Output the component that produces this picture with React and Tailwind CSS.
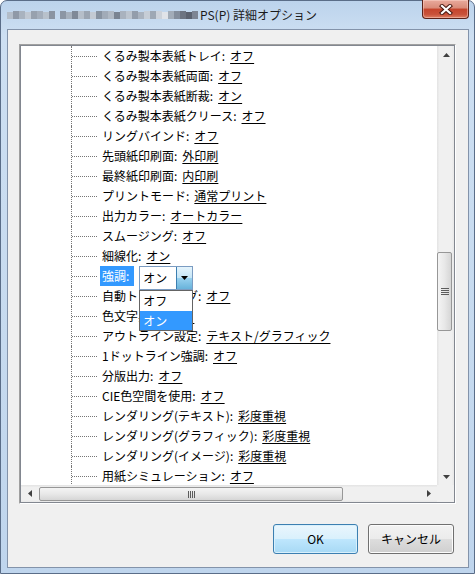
import React from 'react';

const FONT = "font-['Noto_Sans_CJK_JP','Noto_Sans',sans-serif]";

const ROWS_TOP = [
  ['くるみ製本表紙トレイ', 'オフ'],
  ['くるみ製本表紙両面', 'オフ'],
  ['くるみ製本表紙断裁', 'オン'],
  ['くるみ製本表紙クリース', 'オフ'],
  ['リングバインド', 'オフ'],
  ['先頭紙印刷面', '外印刷'],
  ['最終紙印刷面', '内印刷'],
  ['プリントモード', '通常プリント'],
  ['出力カラー', 'オートカラー'],
  ['スムージング', 'オフ'],
  ['細線化', 'オン'],
];

const ROWS_BOTTOM = [
  ['自動トラッピング', 'オフ'],
  ['色文字黒化', 'オフ'],
  ['アウトライン設定', 'テキスト/グラフィック'],
  ['1ドットライン強調', 'オフ'],
  ['分版出力', 'オフ'],
  ['CIE色空間を使用', 'オフ'],
  ['レンダリング(テキスト)', '彩度重視'],
  ['レンダリング(グラフィック)', '彩度重視'],
  ['レンダリング(イメージ)', '彩度重視'],
  ['用紙シミュレーション', 'オフ'],
];

// pixelated (censored) part of the window title
const BLUR_A = ['#b3bdc9', '#8f99a7', '#a9b3bf', '#c0c8d2', '#97a1ae', '#a4aebb', '#b8c1cb', '#8a94a2'];
const BLUR_B = [
  '#8c96a4', '#a7b1bd', '#7f8997', '#b5bec9', '#9ba5b2', '#c3cad3', '#8893a1', '#a1abb8',
  '#b0b9c4', '#7a8492', '#a9b2be', '#bcc4ce', '#939dab', '#aab3bf', '#c6cdd6', '#9ea8b4',
  '#ccd2da', '#e0e3e8', '#a2acb8', '#848e9c', '#6c7482', '#5b6270', '#7d8594',
];

function BlurredTitle() {
  return (
    <svg width="192" height="8" className="mr-[1px] block">
      {BLUR_A.map((c, i) => (
        <rect key={`a${i}`} x={i * 6} y={i % 3 === 0 ? 1 : 0} width="6" height={i % 3 === 0 ? 7 : 8} fill={c} />
      ))}
      {BLUR_B.map((c, i) => (
        <rect key={`b${i}`} x={53 + i * 6} y={i % 4 === 1 ? 1 : 0} width="6" height={i % 4 === 1 ? 7 : 8} fill={c} />
      ))}
    </svg>
  );
}

function Tri({ dir }) {
  const pts = {
    up: '0,4 3.5,0 7,4',
    down: '0,0 7,0 3.5,4',
    left: '4,0 4,7 0,3.5',
    right: '0,0 0,7 4,3.5',
  }[dir];
  const v = dir === 'up' || dir === 'down';
  return (
    <svg width={v ? 7 : 4} height={v ? 4 : 7} className="block">
      <polygon points={pts} fill="#404040" />
    </svg>
  );
}

function Branch({ children, pad = 'ml-[5px]' }) {
  return (
    <div className="flex h-[20px] shrink-0 items-center">
      <div className="ml-[50px] h-full border-l border-dotted border-[#767676]" />
      <div className="w-[25px] border-t border-dotted border-[#767676]" />
      <div className={`${pad} flex items-center whitespace-nowrap`}>{children}</div>
    </div>
  );
}

function Item({ label, value }) {
  return (
    <Branch>
      <span>{label}:</span>
      <span className="ml-[5px] underline underline-offset-[2px]">{value}</span>
    </Branch>
  );
}

function Combo() {
  return (
    <div className="relative ml-[5px] mt-[4px] flex h-[24px] w-[54px] border border-[#7b9cc2] bg-white">
      <div className="flex flex-1 items-center pl-[3px] text-black">オン</div>
      <div className="flex w-[16px] items-center justify-center border-l border-[#3c7fb1] bg-[linear-gradient(to_bottom,#e5f4fc_0%,#c4e5f6_50%,#98d1ef_51%,#68b3db_100%)]">
        <svg width="7" height="4" className="block">
          <polygon points="0,0 7,0 3.5,4" fill="#000" />
        </svg>
      </div>
      <div className="absolute left-[-1px] top-[23px] z-10 w-[54px] border border-[#646464] bg-white">
        <div className="flex h-[20px] items-center pl-[3px] text-black">オフ</div>
        <div className="flex h-[19px] items-center bg-[#3399ff] pl-[3px] text-white">オン</div>
      </div>
    </div>
  );
}

function Tree() {
  return (
    <div className="h-full overflow-hidden bg-white text-[12px] text-black">
      {ROWS_TOP.map(([l, v]) => (
        <Item key={l} label={l} value={v} />
      ))}
      <Branch pad="ml-[3px]">
        <span className="flex h-[20px] items-center bg-[#3399ff] pl-[2px] pr-[5px] text-white">強調:</span>
        <Combo />
      </Branch>
      {ROWS_BOTTOM.map(([l, v]) => (
        <Item key={l} label={l} value={v} />
      ))}
    </div>
  );
}

function VScroll() {
  return (
    <div className="flex h-full flex-col bg-[linear-gradient(to_right,#e3e3e3_0%,#f0f0f0_15%,#f0f0f0_85%,#e8e8e8_100%)]">
      <div className="flex h-[17px] shrink-0 items-center justify-center pl-[1px]">
        <Tri dir="up" />
      </div>
      <div className="flex-1">
        <div className="mt-[189px] flex h-[79px] w-[15px] items-center justify-center rounded-[2px] border border-[#979797] bg-[linear-gradient(to_right,#f4f4f4_0%,#e8e8e8_50%,#d6d6d6_100%)]">
          <div className="flex flex-col gap-[1px]">
            <div className="h-px w-[8px] bg-[#5c5c5c]" />
            <div className="h-px w-[8px] bg-[#5c5c5c]" />
            <div className="h-px w-[8px] bg-[#5c5c5c]" />
            <div className="h-px w-[8px] bg-[#5c5c5c]" />
          </div>
        </div>
      </div>
      <div className="flex h-[17px] shrink-0 items-center justify-center pl-[1px]">
        <Tri dir="down" />
      </div>
    </div>
  );
}

function HScroll() {
  return (
    <div className="flex h-full bg-[linear-gradient(to_bottom,#e3e3e3_0%,#f0f0f0_15%,#f0f0f0_85%,#e8e8e8_100%)]">
      <div className="flex w-[17px] shrink-0 items-center justify-center">
        <Tri dir="left" />
      </div>
      <div className="flex-1">
        <div className="ml-[1px] mt-[2px] flex h-[14px] w-[304px] items-center justify-center rounded-[2px] border border-[#979797] bg-[linear-gradient(to_bottom,#f4f4f4_0%,#e8e8e8_50%,#d6d6d6_100%)]">
          <div className="flex gap-[1px]">
            <div className="h-[7px] w-px bg-[#5c5c5c]" />
            <div className="h-[7px] w-px bg-[#5c5c5c]" />
            <div className="h-[7px] w-px bg-[#5c5c5c]" />
            <div className="h-[7px] w-px bg-[#5c5c5c]" />
          </div>
        </div>
      </div>
      <div className="flex w-[17px] shrink-0 items-center justify-center">
        <Tri dir="right" />
      </div>
    </div>
  );
}

function CloseButton() {
  return (
    <div className="-mt-px mr-[5px] flex h-[19px] w-[47px] items-center justify-center rounded-b-[4px] border border-t-0 border-[#5b2219] bg-[linear-gradient(to_bottom,#e9aa9c_0%,#d98b79_45%,#c5442c_50%,#c9523a_80%,#de7f64_100%)] shadow-[inset_0_0_0_1px_rgba(255,220,210,0.45)]">
      <svg width="14" height="11" viewBox="0 0 14 11" className="block">
        <path d="M3 2 L11 9 M11 2 L3 9" stroke="#4a1a12" strokeWidth="4.2" strokeLinecap="square" />
        <path d="M3 2 L11 9 M11 2 L3 9" stroke="#ffffff" strokeWidth="2.2" strokeLinecap="square" />
      </svg>
    </div>
  );
}

export default function App() {
  return (
    <div className={`${FONT} h-[574px] w-[475px] overflow-hidden bg-white`}>
      <div className="flex h-full flex-col rounded-t-[7px] border border-[#5a6d88] bg-[linear-gradient(to_bottom,#bcd3ec_0%,#cddff2_6%,#c6daef_60%,#bfd5ed_100%)]">
        <div className="flex h-[28px] shrink-0 justify-between">
          <div className="flex items-center pl-[6px] text-[12px] text-[#1b1b1b]">
            <BlurredTitle />
            <span>PS(P) 詳細オプション</span>
          </div>
          <CloseButton />
        </div>
        <div className="mb-[5px] ml-[6px] mr-[5px] flex flex-1 flex-col border border-[#8393aa] bg-[#f0f0f0] pl-[11px] pr-[13px] pt-[14px]">
          <div className="h-[460px] w-[437px] border border-t-[#a0a0a0] border-l-[#a0a0a0] border-b-[#ffffff] border-r-[#ffffff] bg-[#e3e3e3]">
            <div className="grid h-full grid-cols-[1fr_17px] grid-rows-[1fr_17px] border border-[#828790] bg-white">
              <Tree />
              <VScroll />
              <HScroll />
              <div className="bg-[#f0f0f0]" />
            </div>
          </div>
          <div className="mt-[20px] flex justify-end gap-[10px] pr-px text-[12px] text-black">
            <button className="h-[30px] w-[85px] rounded-[3px] border border-[#3c7fb1] bg-[linear-gradient(to_bottom,#eaf6fd_0%,#d9f0fc_50%,#bee6fd_51%,#a7d9f5_100%)] shadow-[inset_0_0_0_1px_#d8f0fc]">
              OK
            </button>
            <button className="h-[30px] w-[86px] rounded-[3px] border border-[#707070] bg-[linear-gradient(to_bottom,#f2f2f2_0%,#ebebeb_50%,#dddddd_51%,#cfcfcf_100%)] shadow-[inset_0_0_0_1px_#fcfcfc]">
              キャンセル
            </button>
          </div>
        </div>
      </div>
    </div>
  );
}
